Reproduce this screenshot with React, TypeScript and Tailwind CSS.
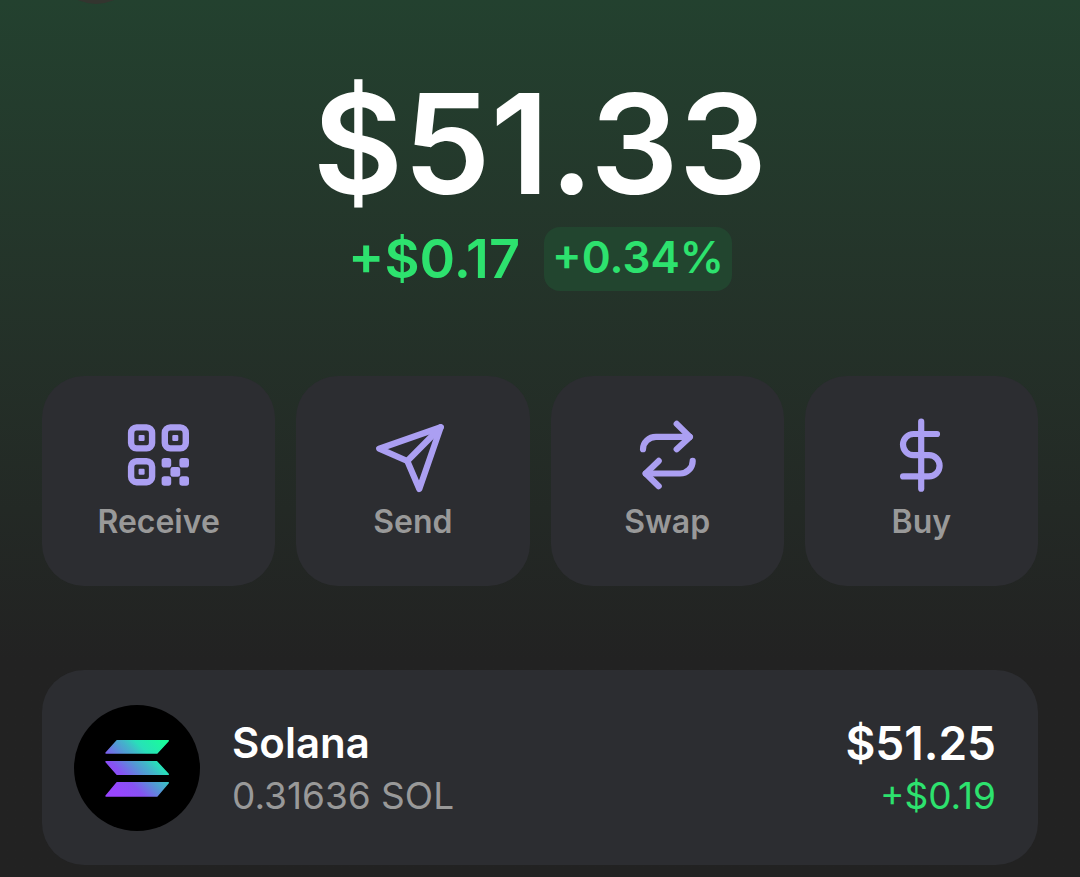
import React from 'react';

// ============================================================================
// ICONS
// ============================================================================

function ReceiveIcon() {
    return (
        <svg viewBox="0.6 0 72 72" className="size-[72px] overflow-visible" aria-hidden="true">
            <g fill="none" stroke="currentColor" strokeWidth="6.4">
                <rect x="8.7" y="8.4" width="21" height="21" rx="5.5" />
                <rect x="42.4" y="8.4" width="21" height="21" rx="5.5" />
                <rect x="8.7" y="42.2" width="21" height="21" rx="5.5" />
            </g>
            <g fill="currentColor">
                <rect x="16.2" y="15.9" width="6" height="6" rx="1.2" />
                <rect x="49.9" y="15.9" width="6" height="6" rx="1.2" />
                <rect x="16.2" y="49.7" width="6" height="6" rx="1.2" />
                <rect x="39.2" y="39" width="9.6" height="9.6" rx="2.8" />
                <rect x="57" y="39" width="9.6" height="9.6" rx="2.8" />
                <rect x="48" y="48" width="9.8" height="9.8" rx="2.4" />
                <rect x="39.2" y="57.2" width="9.6" height="9.6" rx="2.8" />
                <rect x="57" y="57.2" width="9.6" height="9.6" rx="2.8" />
            </g>
        </svg>
    );
}

function LineIcon({ children }: { children: React.ReactNode }) {
    return (
        <svg
            viewBox="0 0 72 72"
            className="size-[72px] overflow-visible"
            fill="none"
            stroke="currentColor"
            strokeWidth="6.2"
            strokeLinecap="round"
            strokeLinejoin="round"
            aria-hidden="true"
        >
            {children}
        </svg>
    );
}

function SendIcon() {
    return (
        <LineIcon>
            <path d="M63.7 8.3 2.2 29.7 30.3 42 42.3 70Z" />
            <path d="M30.3 42 63.7 8.3" />
        </LineIcon>
    );
}

function SwapIcon() {
    return (
        <LineIcon>
            <path d="M12 30.2a13 12.3 0 0 1 13-12.3H58.7" />
            <path d="M45.7 4.9 58.9 17.9 45.7 30.2" />
            <path d="M61.7 41.9a12.6 12.6 0 0 1-12.6 12.6H14.7" />
            <path d="M27.7 41.9 14.7 54.5 27.7 67.2" />
        </LineIcon>
    );
}

function BuyIcon() {
    return (
        <LineIcon>
            <path d="M36.2 2.7V69.7" />
            <path d="M52 15H28.6a10.6 10.6 0 0 0 0 21.2H44a10.6 10.6 0 0 1 0 21.2H18.1" />
        </LineIcon>
    );
}

function SolanaLogo() {
    return (
        <svg viewBox="0 0 126 126" className="size-[126px] shrink-0" aria-hidden="true">
            <defs>
                <linearGradient id="solana" gradientUnits="userSpaceOnUse" x1="36" y1="90" x2="92" y2="36">
                    <stop offset="0.08" stopColor="#9945ff" />
                    <stop offset="0.3" stopColor="#8752f3" />
                    <stop offset="0.5" stopColor="#5497d5" />
                    <stop offset="0.6" stopColor="#43b4ca" />
                    <stop offset="0.72" stopColor="#28e0b9" />
                    <stop offset="0.97" stopColor="#19fb9b" />
                </linearGradient>
            </defs>
            <circle cx="63" cy="63" r="63" fill="#000" />
            <g fill="url(#solana)" stroke="url(#solana)" strokeWidth="1.4" strokeLinejoin="round">
                <path d="M32 48 43 35.7H94.3L83 48Z" />
                <path d="M32 56.7H82.7L94.3 69.3H43Z" />
                <path d="M32 91 43 77.7H94.3L83 91Z" />
            </g>
        </svg>
    );
}

// ============================================================================
// ACTION BUTTON
// ============================================================================

function ActionButton({
    icon,
    label
}: {
    icon: React.ReactNode;
    label: string
}) {
    return (
        <button className="flex flex-col items-center gap-[11px] rounded-[42px] bg-[#2c2d31] pt-[43px] pb-11 text-[#ab9ff2]">
            {icon}
            <span className="text-[32px] leading-[40px] font-semibold text-[#999999]">{label}</span>
        </button>
    );
}

// ============================================================================
// TOKEN ROW
// ============================================================================

function TokenRow({
    name,
    amount,
    value,
    change
}: {
    name: string;
    amount: string;
    value: string;
    change: string
}) {
    return (
        <li className="flex items-center gap-8 rounded-[42px] bg-[#2c2d31] pt-[35px] pr-[42px] pb-[34px] pl-8">
            <SolanaLogo />
            <div className="flex-1 pt-1">
                <p className="text-[42px] leading-[52px] font-semibold text-white">{name}</p>
                <p className="text-[37px] leading-[54px] text-[#999999]">{amount}</p>
            </div>
            <div className="pt-1 text-right">
                <p className="text-[46px] leading-[52px] font-semibold text-white">{value}</p>
                <p className="text-[37px] leading-[54px] text-[#2de26e]">{change}</p>
            </div>
        </li>
    );
}

// ============================================================================
// WALLET HOME
// ============================================================================

export default function App() {
    return (
        <main className="relative min-h-screen overflow-hidden bg-[#222222] bg-linear-to-b from-[#23412f] from-0% to-[#222222] to-[660px] px-[42px] pt-[72px] pb-3 font-['Inter',sans-serif]">
            {/* lower edge of the account avatar */}
            <div className="absolute -top-20 left-[54px] size-[84px] rounded-full bg-[#33352f]" />

            <header className="flex flex-col items-center">
                <h1 className="text-[139px] leading-[144px] font-semibold text-white">$51.33</h1>
                <div className="mt-[11px] flex items-center gap-6 font-semibold text-[#2de26e]">
                    <span className="text-[54px] leading-[64px]">+$0.17</span>
                    <span className="rounded-2xl bg-[#22452f] px-2 pb-1 text-[44px] leading-[60px]">+0.34%</span>
                </div>
            </header>

            <nav className="mt-[85px] grid grid-cols-4 gap-[21px]">
                <ActionButton icon={<ReceiveIcon />} label="Receive" />
                <ActionButton icon={<SendIcon />} label="Send" />
                <ActionButton icon={<SwapIcon />} label="Swap" />
                <ActionButton icon={<BuyIcon />} label="Buy" />
            </nav>

            <ul className="mt-[84px]">
                <TokenRow name="Solana" amount="0.31636 SOL" value="$51.25" change="+$0.19" />
            </ul>
        </main>
    );
}
